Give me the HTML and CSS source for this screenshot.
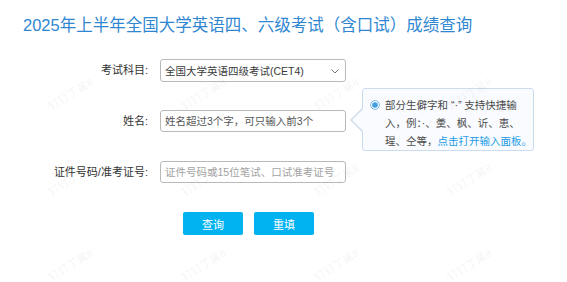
FILE: index.html
```html
<!DOCTYPE html>
<html lang="zh-CN">

<head>
  <meta charset="utf-8">
  <meta name="viewport" content="width=device-width, initial-scale=1">
  <title>成绩查询</title>
  <link rel="stylesheet" href="styles.css">
</head>

<body>
  <div class="page">
    <h1 class="title">2025年上半年全国大学英语四、六级考试（含口试）成绩查询</h1>

    <form class="query-form">
      <label class="field-label">考试科目:</label>
      <div class="select">
        <span>全国大学英语四级考试(CET4)</span>
        <svg class="select-arrow" width="8" height="5" viewBox="0 0 8 5">
          <path d="M0.5 0.5 L4 4 L7.5 0.5" fill="none" stroke="#777" stroke-width="1"/>
        </svg>
      </div>

      <label class="field-label">姓名:</label>
      <div class="name-field">
        <input class="text-input name-input" type="text" placeholder="姓名超过3个字，可只输入前3个">
        <div class="tip">
          <svg class="tip-radio" width="10" height="10" viewBox="0 0 10 10">
            <circle cx="5" cy="5" r="4.4" fill="#fff" stroke="#7db8e8" stroke-width="1"/>
            <circle cx="5" cy="5" r="2.8" fill="#3f9ee0"/>
          </svg>
          <p class="tip-text">部分生僻字和 “·” 支持快捷输<br>入，例：·、羮、枫、䜣、恵、<br>瑆、仝等，<span class="tip-link">点击打开输入面板。</span></p>
        </div>
      </div>

      <label class="field-label">证件号码/准考证号:</label>
      <input class="text-input id-input" type="text" placeholder="证件号码或15位笔试、口试准考证号">

      <div class="actions">
        <button type="button" class="btn">查询</button>
        <button type="button" class="btn">重填</button>
      </div>
    </form>

    <div class="watermarks">
      <span>钉钉丁晨8</span><span>钉钉丁晨8</span><span>钉钉丁晨8</span><span>钉钉丁晨8</span>
      <span>钉钉丁晨8</span><span>钉钉丁晨8</span><span>钉钉丁晨8</span><span>钉钉丁晨8</span>
      <span class="wm-last">钉钉丁晨8</span><span class="wm-last">钉钉丁晨8</span><span class="wm-last">钉钉丁晨8</span><span class="wm-last">钉钉丁晨8</span>
    </div>
  </div>
</body>

</html>
```

FILE: styles.css
```css
body {
  margin: 0;
  padding: 0;
  background-color: #fff;
  font-family: 'Liberation Sans', 'Noto Sans CJK SC', sans-serif;
  color: #333;
}

.page {
  position: relative;
  height: 282px;
  overflow: hidden;
}

.title {
  margin: 0;
  padding: 13px 0 0 23px;
  font-size: 16.5px;
  font-weight: normal;
  line-height: 24px;
  color: #2f87d2;
}

.query-form {
  display: grid;
  grid-template-columns: 148px 186px;
  grid-auto-rows: 23px;
  column-gap: 12px;
  row-gap: 28px;
  margin-top: 22px;
}

.field-label {
  font-size: 11px;
  line-height: 23px;
  text-align: right;
  color: #333;
}

.select {
  display: flex;
  align-items: center;
  justify-content: space-between;
  box-sizing: border-box;
  height: 23px;
  padding: 0 6px 0 4px;
  border: 1px solid #b9b9b9;
  border-radius: 3px;
  font-size: 10.5px;
  color: #3a3a3a;
}

.select-arrow {
  margin-top: 1px;
}

.name-field {
  position: relative;
}

.text-input {
  box-sizing: border-box;
  width: 186px;
  height: 22px;
  margin: 0;
  padding: 0 4px;
  border: 1px solid #b9b9b9;
  border-radius: 3px;
  font-family: inherit;
  font-size: 10.5px;
  color: #333;
  outline: none;
}

.name-input::placeholder {
  color: #555;
}

.id-input::placeholder {
  color: #a3a3a3;
}

.tip {
  position: absolute;
  left: 202px;
  top: -22px;
  z-index: 2;
  display: flex;
  box-sizing: border-box;
  width: 172px;
  height: 63px;
  padding: 7px 0 0 7px;
  border: 1px solid #cbdcee;
  border-radius: 3px;
  background-color: #f9fbfe;
}

.tip::before,
.tip::after {
  content: "";
  position: absolute;
  top: 19px;
  width: 0;
  height: 0;
  border-style: solid;
}

.tip::before {
  left: -13px;
  border-width: 12px 12px 12px 0;
  border-color: transparent #cbdcee transparent transparent;
}

.tip::after {
  left: -11px;
  top: 20px;
  border-width: 11px 11px 11px 0;
  border-color: transparent #f9fbfe transparent transparent;
}

.tip-radio {
  flex-shrink: 0;
  margin-top: 4px;
  margin-right: 5px;
}

.tip-text {
  margin: 0;
  font-size: 10.5px;
  line-height: 18px;
  color: #4a4a4a;
  white-space: nowrap;
}

.tip-link {
  color: #1c9be6;
}

.actions {
  grid-column: 2;
  display: flex;
  gap: 11px;
  padding-left: 23px;
}

.btn {
  width: 60px;
  height: 23px;
  margin: 0;
  padding: 0;
  border: none;
  border-radius: 2px;
  background-color: #00b2f0;
  color: #fff;
  font-family: inherit;
  font-size: 11px;
}

.watermarks {
  position: absolute;
  left: 4px;
  top: 50px;
  bottom: 0;
  display: grid;
  grid-template-columns: repeat(4, 133px);
  grid-template-rows: 86px 86px 1fr;
  place-items: center;
  pointer-events: none;
  z-index: 3;
}

.watermarks span {
  transform: rotate(-32deg);
  font-size: 11px;
  font-weight: bold;
  color: rgba(0, 0, 0, 0.045);
}

.watermarks .wm-last {
  align-self: end;
  margin-bottom: 10px;
}
```
